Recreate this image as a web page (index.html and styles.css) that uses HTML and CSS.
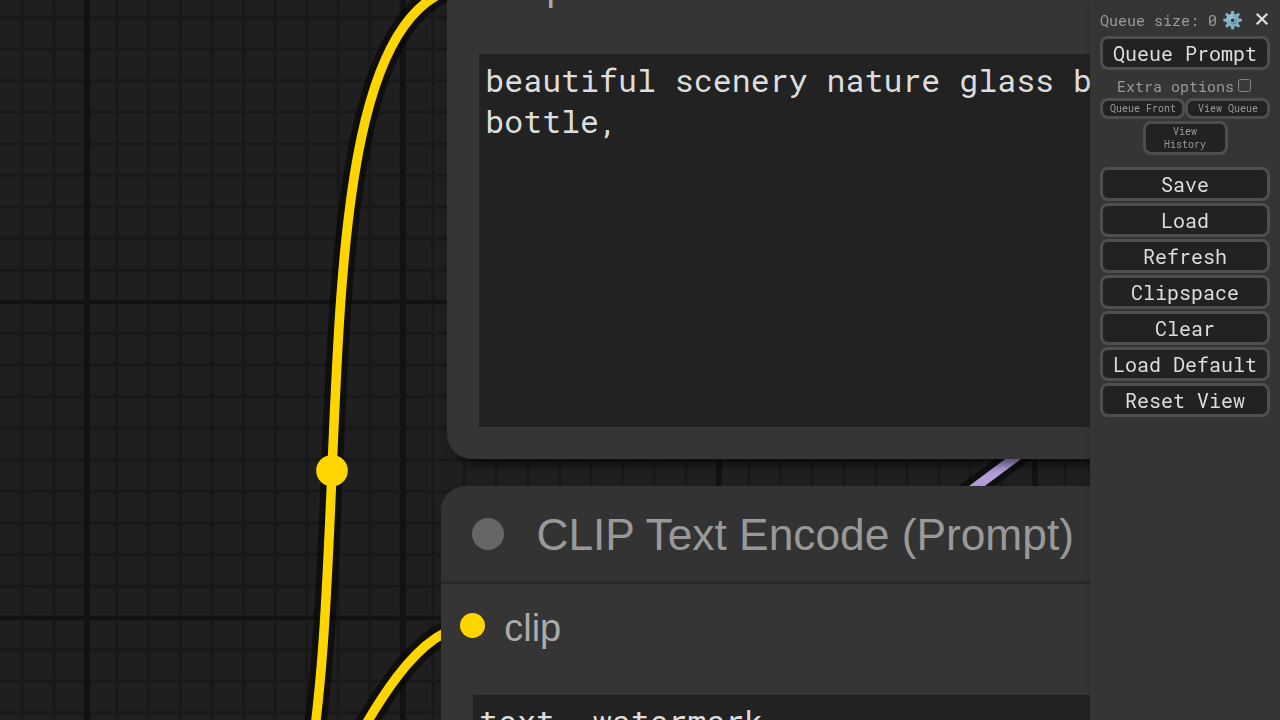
FILE: index.html
```
<!DOCTYPE html>
<html lang="en">
<head>
<meta charset="utf-8">
<title>ComfyUI</title>
<link rel="stylesheet" href="styles.css">
</head>
<body>
<main class="app">
  <section class="canvas">
    <svg class="graph" width="1280" height="720" viewBox="0 0 1280 720">
      <defs>
        <pattern id="minor" x="6.5" y="1.6" width="31.6" height="31.6" patternUnits="userSpaceOnUse">
          <path class="grid-minor" d="M15.8 0V31.6M0 15.8H31.6"/>
        </pattern>
        <pattern id="major" x="-71" y="144.5" width="316" height="316" patternUnits="userSpaceOnUse">
          <path class="grid-major-v" d="M158 0V316"/>
          <path class="grid-major-h" d="M0 157.5H316"/>
        </pattern>
      </defs>
      <rect width="1280" height="720" fill="url(#minor)"/>
      <rect width="1280" height="720" fill="url(#major)"/>
      <path class="link-shadow" d="M940 513.5L1048 433"/>
      <path class="link link-latent" d="M940 513.5L1048 433"/>
      <path class="link-shadow" d="M185 957.5C439 957.5 225 -15.5 479 -15.5"/>
      <path class="link" d="M185 957.5C439 957.5 225 -15.5 479 -15.5"/>
      <circle class="link-dot" cx="332" cy="470.7" r="15.8"/>
      <path class="link-shadow" d="M185 957.5C295 957.5 362.5 625.5 472.5 625.5"/>
      <path class="link" d="M185 957.5C295 957.5 362.5 625.5 472.5 625.5"/>
    </svg>
    <article class="node node-positive">
      <header class="node-title"><span class="node-state"></span><span class="title-label">CLIP Text Encode (Prompt)</span></header>
      <div class="node-input"><span class="slot"></span><span class="slot-label">clip</span></div>
      <div class="node-text">beautiful scenery nature glass bottle landscape, , purple galaxy<br>bottle,</div>
    </article>
    <article class="node node-negative">
      <header class="node-title"><span class="node-state"></span><span class="title-label">CLIP Text Encode (Prompt)</span></header>
      <div class="node-input"><span class="slot"></span><span class="slot-label">clip</span></div>
      <div class="node-text">text, watermark</div>
    </article>
  </section>
  <aside class="menu">
    <div class="menu-head">
      <span class="queue-size">Queue size: 0</span>
      <span class="gear">⚙️</span>
      <svg class="close" width="14" height="14" viewBox="0 0 14 14"><path d="M1.7 1.7L12.3 12.3M12.3 1.7L1.7 12.3"/></svg>
    </div>
    <button class="btn">Queue Prompt</button>
    <label class="extra">Extra options<span class="check"></span></label>
    <div class="small-row">
      <button class="small">Queue Front</button>
      <button class="small">View Queue</button>
      <button class="small history">View<br>History</button>
    </div>
    <div class="actions">
      <button class="btn">Save</button>
      <button class="btn">Load</button>
      <button class="btn">Refresh</button>
      <button class="btn">Clipspace</button>
      <button class="btn">Clear</button>
      <button class="btn">Load Default</button>
      <button class="btn">Reset View</button>
    </div>
  </aside>
</main>
</body>
</html>
```
FILE: styles.css
```
* { box-sizing: border-box; }
body { margin: 0; background: #1f1f1f; overflow: hidden; }
.app { position: relative; display: flex; justify-content: flex-end; width: 1280px; height: 720px; overflow: hidden; }
.canvas { position: absolute; inset: 0; background: #1f1f1f; overflow: hidden; }
.graph { display: block; }
.grid-minor { stroke: #181818; stroke-width: 3.2; fill: none; }
.grid-major-v { stroke: #121212; stroke-width: 6; }
.grid-major-h { stroke: #121212; stroke-width: 4; }
.link-shadow { fill: none; stroke: rgba(0, 0, 0, 0.5); stroke-width: 22; }
.link { fill: none; stroke: #ffd500; stroke-width: 9.5; }
.link-latent { stroke: #b39ddb; }
.link-dot { fill: #ffd500; }

.node {
  position: absolute;
  width: 1350px;
  background: #353535;
  border-radius: 25px;
  box-shadow: 6px 6px 9px rgba(0, 0, 0, 0.5);
  font-family: "Liberation Sans", Arial, sans-serif;
  color: #aaa;
}
.node-positive { left: 447.3px; top: -155px; height: 614px; }
.node-negative { left: 441px; top: 486px; height: 614px; }
.node-title {
  display: flex;
  align-items: center;
  gap: 32px;
  height: 98px;
  padding: 0 0 0 31.4px;
  border-bottom: 3px solid #292929;
  border-radius: 25px 25px 0 0;
  background: #333;
  color: #999;
  font-size: 44.3px;
  line-height: 96px;
  white-space: nowrap;
}
.title-label { padding-top: 3px; }
.node-state { width: 32px; height: 32px; border-radius: 50%; background: #666; flex: none; }
.node-input {
  display: flex;
  align-items: center;
  gap: 19px;
  height: 83px;
  padding-left: 19px;
  font-size: 37.9px;
  line-height: 44px;
}
.slot-label { padding-top: 4px; }
.slot { width: 25.3px; height: 25.3px; border-radius: 50%; background: #ffd500; flex: none; }
.node-text {
  height: 373px;
  margin: 28px 31.7px 0;
  padding: 6.3px;
  background: #222;
  color: #ddd;
  font: 31.6px/41.08px "Roboto Mono", "DejaVu Sans Mono", monospace;
  white-space: nowrap;
  overflow: hidden;
}

.menu {
  position: relative;
  width: 190px;
  height: 720px;
  padding: 4px 10px;
  background: #353535;
  box-shadow: 3px 3px 8px rgba(0, 0, 0, 0.4);
  color: #999;
  font: 15px/20px "Roboto Mono", "DejaVu Sans Mono", monospace;
  will-change: transform;
}
.menu-head { display: flex; align-items: center; height: 32px; white-space: nowrap; }
.gear { width: 20px; margin-left: 5px; font-size: 17px; font-family: "Noto Color Emoji", sans-serif; }
.close { margin: -3px 0 0 12.5px; flex: none; fill: none; stroke: #ddd; stroke-width: 2.3; }
.btn, .small {
  display: block;
  margin: 0;
  padding: 0;
  border: 3px solid #4e4e4e;
  border-radius: 8px;
  background: #222;
  font-family: inherit;
}
.btn { width: 170px; height: 34px; color: #ddd; font-size: 20px; line-height: 28px; }
.extra { display: flex; justify-content: center; align-items: center; height: 28px; padding: 4px 1px 0 0; }
.check { width: 13px; height: 13px; margin: -1px 1px 0 4px; border: 1px solid #858585; border-radius: 2.5px; background: #3b3b3b; }
.small-row { display: flex; flex-wrap: wrap; justify-content: center; gap: 2px 0; }
.small { width: 85px; height: 21px; padding-left: 1px; color: #999; font-size: 10px; line-height: 13px; white-space: nowrap; }
.history { height: 34px; padding: 0; }
.actions { display: flex; flex-direction: column; gap: 2px; margin-top: 12px; }
```
